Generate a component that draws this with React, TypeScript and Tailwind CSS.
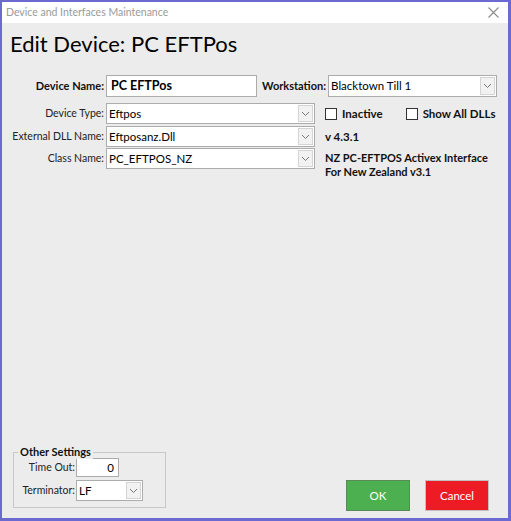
import React from "react";

const font = { fontFamily: 'Lato, "Noto Sans", Arial, sans-serif' };

function Chevron() {
  return (
    <svg width="9" height="6" viewBox="0 0 9 6" fill="none">
      <path d="M1 1 L4.5 4.5 L8 1" stroke="#777" strokeWidth="1" />
    </svg>
  );
}

function Select({ value, w, h = 21 }: { value: string; w: string; h?: number }) {
  return (
    <div
      className={`${w} flex items-stretch bg-white border border-[#acacac]`}
      style={{ height: h }}
    >
      <div className="flex-1 flex items-center pl-[2px] text-[11.5px] text-black overflow-hidden whitespace-nowrap">
        {value}
      </div>
      <div className="w-[15px] my-[1px] mr-[1px] flex items-center justify-center bg-[#f2f2f2] border border-[#d4d4d4]">
        <Chevron />
      </div>
    </div>
  );
}

function Check({ label }: { label: string }) {
  return (
    <div className="flex items-center gap-[5px] whitespace-nowrap">
      <div className="w-[12px] h-[12px] bg-white border border-[#333]" />
      <span className="text-[11.5px] font-bold text-[#111]">{label}</span>
    </div>
  );
}

export default function App() {
  return (
    <div
      className="w-[511px] h-[521px] border-t-2 border-l-2 border-r-[3px] border-b-[3px] border-[#6a6ad2] flex flex-col bg-[#ececec]"
      style={font}
    >
      <div className="h-[21px] bg-white flex items-center justify-between pl-[4px] pr-[9px]">
        <span className="text-[10.5px] text-[#9a9a9a] whitespace-nowrap">Device and Interfaces Maintenance</span>
        <svg width="11" height="11" viewBox="0 0 11 11">
          <path d="M0.5 0.5 L10.5 10.5 M10.5 0.5 L0.5 10.5" stroke="#8a8a8a" strokeWidth="1.1" />
        </svg>
      </div>
      <div className="flex-1 flex flex-col">
        <div className="pl-[8px] pt-[7px] text-[22px] leading-[28px] text-black whitespace-nowrap">Edit Device: PC EFTPos</div>

        <div className="mt-[17px] flex items-center whitespace-nowrap">
          <div className="w-[104px] text-right text-[11px] font-bold text-[#111] pr-[2px]">Device Name:</div>
          <div className="w-[151px] h-[22px] bg-white border border-[#acacac] flex items-center pl-[4px] text-[12.5px] font-bold text-black">
            PC EFTPos
          </div>
          <div className="ml-[5px] text-[11px] font-bold text-[#111] pr-[2px]">Workstation:</div>
          <Select value="Blacktown Till 1" w="w-[169px]" h={22} />
        </div>

        <div className="mt-[6px] flex items-center whitespace-nowrap">
          <div className="w-[104px] text-right text-[10.5px] text-[#222] pr-[2px]">Device Type:</div>
          <Select value="Eftpos" w="w-[209px]" />
          <div className="ml-[10px]">
            <Check label="Inactive" />
          </div>
          <div className="ml-[23px]">
            <Check label="Show All DLLs" />
          </div>
        </div>

        <div className="mt-[2px] flex items-center whitespace-nowrap">
          <div className="w-[104px] text-right text-[10.5px] text-[#222] pr-[2px]">External DLL Name:</div>
          <Select value="Eftposanz.Dll" w="w-[209px]" />
          <div className="ml-[10px] text-[11.5px] font-bold text-[#111]">v 4.3.1</div>
        </div>

        <div className="mt-[1px] flex items-start whitespace-nowrap">
          <div className="w-[104px] h-[21px] flex items-center justify-end text-[10.5px] text-[#222] pr-[2px]">Class Name:</div>
          <Select value="PC_EFTPOS_NZ" w="w-[209px]" />
          <div className="ml-[10px] pt-[3px] text-[11px] leading-[14px] font-bold text-[#111]">
            NZ PC-EFTPOS Activex Interface
            <br />
            For New Zealand v3.1
          </div>
        </div>

        <div className="mt-auto flex items-end pb-[7px]">
          <div className="ml-[11px] relative w-[153px] h-[56px] border border-[#c8c8c8] mb-[3px] whitespace-nowrap">
            <div className="absolute left-[4px] top-[-9px] px-[2px] bg-[#ececec] text-[11px] leading-[15px] font-bold text-[#111]">
              Other Settings
            </div>
            <div className="pt-[5px] flex flex-col gap-[3px]">
              <div className="flex items-center">
                <div className="w-[62px] text-right text-[10.5px] text-[#222] pr-[1px]">Time Out:</div>
                <div className="w-[43px] h-[19px] bg-white border border-[#acacac] flex items-center justify-end pr-[4px] text-[11.5px] text-black">
                  0
                </div>
              </div>
              <div className="flex items-center">
                <div className="w-[62px] text-right text-[10.5px] text-[#222] pr-[1px]">Terminator:</div>
                <Select value="LF" w="w-[67px]" />
              </div>
            </div>
          </div>
          <div className="ml-auto flex gap-[15px] mr-[19px]">
            <button className="w-[64px] h-[31px] bg-[#4caf50] border border-[#5a8a5a] text-white text-[11.5px]">OK</button>
            <button className="w-[64px] h-[31px] bg-[#ed1c24] border border-[#c0c0c0] text-white text-[11.5px]">Cancel</button>
          </div>
        </div>
      </div>
    </div>
  );
}
